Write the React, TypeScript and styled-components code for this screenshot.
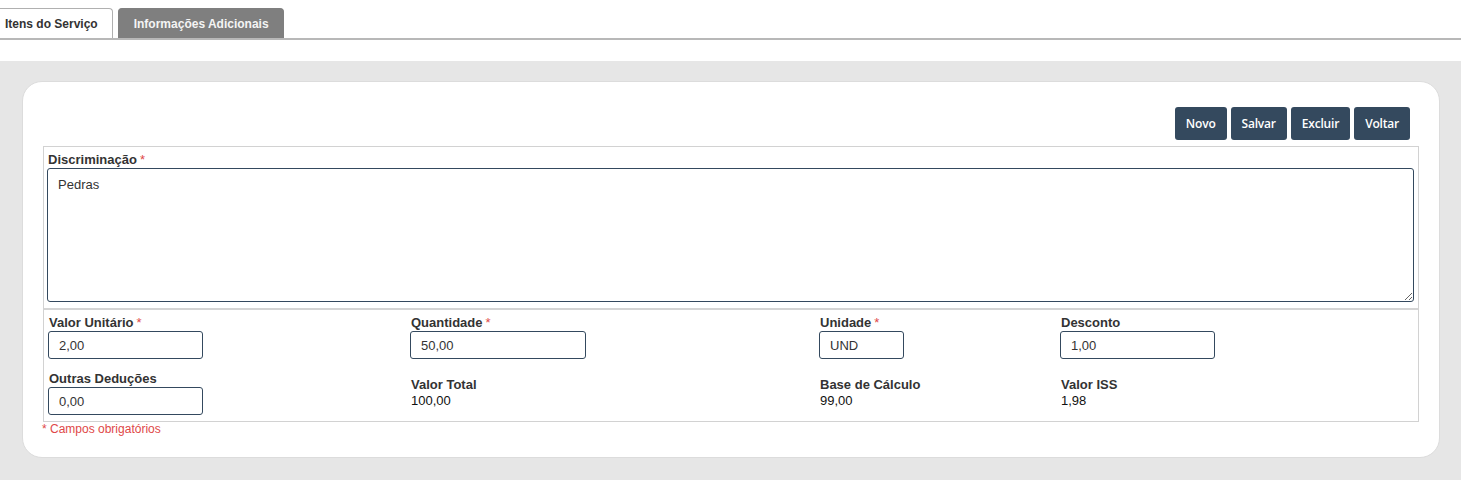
import styled, { createGlobalStyle } from "styled-components";

const GlobalStyle = createGlobalStyle`
  body {
    margin: 0;
    background: #ffffff;
    font-family: "Liberation Sans", Arial, sans-serif;
    color: #333333;
  }
`;

const Page = styled.div`
  min-height: 100vh;
  display: flex;
  flex-direction: column;
`;

const TabBar = styled.div`
  display: flex;
  align-items: flex-end;
  padding-top: 8px;
  border-bottom: 2px solid #b8b8b8;
  overflow: hidden;
`;

const Tab = styled.div<{ $active?: boolean }>`
  height: 30px;
  box-sizing: border-box;
  display: flex;
  align-items: center;
  padding: 0 14px 0 15px;
  margin-right: 5px;
  font-size: 12px;
  font-weight: bold;
  border: 1px solid ${(p) => (p.$active ? "#b0b0b0" : "#7f7f7f")};
  border-bottom: none;
  border-radius: 4px 4px 0 0;
  background: ${(p) => (p.$active ? "#ffffff" : "#7f7f7f")};
  color: ${(p) => (p.$active ? "#333333" : "#f4f4f4")};
  &:first-child {
    margin-left: -11px;
  }
`;

const Backdrop = styled.div`
  flex: 1;
  margin-top: 21px;
  background: #e6e6e6;
  padding: 20px 21px 22px 22px;
`;

const Card = styled.div`
  background: #ffffff;
  border: 1px solid #dcdcdc;
  border-radius: 20px;
  padding: 25px 20px 20px 20px;
`;

const Toolbar = styled.div`
  display: flex;
  justify-content: flex-end;
  gap: 4px;
  padding-right: 9px;
  margin-bottom: 6px;
`;

const ActionButton = styled.button`
  height: 33px;
  padding: 0 11px;
  border: none;
  border-radius: 3px;
  background: #34495e;
  color: #ffffff;
  font-family: "Open Sans", "Liberation Sans", sans-serif;
  font-weight: 600;
  font-size: 12px;
  letter-spacing: -0.2px;
  cursor: pointer;
`;

const FormBox = styled.div`
  border: 1px solid #d2d2d2;
`;

const DescSection = styled.div`
  padding: 5px 4px 6px 3px;
  border-bottom: 2px solid #d4d4d4;
`;

const Label = styled.label`
  display: block;
  font-size: 13px;
  font-weight: bold;
  line-height: 16px;
  color: #333333;
  padding-left: 1px;
`;

const Required = styled.span`
  color: #e04848;
  font-weight: normal;
  margin-left: 3px;
`;

const TextArea = styled.textarea`
  display: block;
  width: 100%;
  height: 134px;
  box-sizing: border-box;
  border: 1px solid #34495e;
  border-radius: 3px;
  padding: 8px 10px;
  font-family: "Liberation Sans", Arial, sans-serif;
  font-size: 13px;
  color: #333333;
  resize: vertical;
`;

const FieldGrid = styled.div`
  display: grid;
  grid-template-columns: 362px 409px 241px 1fr;
  row-gap: 12px;
  align-items: center;
  padding: 5px 4px 6px 4px;
`;

const Field = styled.div``;

const Input = styled.input<{ $width: number }>`
  display: block;
  width: ${(p) => p.$width}px;
  height: 28px;
  box-sizing: border-box;
  border: 1px solid #34495e;
  border-radius: 3px;
  padding: 0 10px;
  font-family: "Liberation Sans", Arial, sans-serif;
  font-size: 13px;
  color: #333333;
`;

const Value = styled.div`
  font-size: 13px;
  line-height: 16px;
  color: #111111;
  padding-left: 1px;
`;

const Note = styled.div`
  margin-left: -1px;
  font-size: 12px;
  line-height: 15px;
  color: #e04848;
`;

export default function App() {
  return (
    <Page>
      <GlobalStyle />
      <TabBar>
        <Tab $active>Itens do Serviço</Tab>
        <Tab>Informações Adicionais</Tab>
      </TabBar>
      <Backdrop>
        <Card>
          <Toolbar>
            <ActionButton>Novo</ActionButton>
            <ActionButton>Salvar</ActionButton>
            <ActionButton>Excluir</ActionButton>
            <ActionButton>Voltar</ActionButton>
          </Toolbar>
          <FormBox>
            <DescSection>
              <Label>
                Discriminação<Required>*</Required>
              </Label>
              <TextArea defaultValue="Pedras" />
            </DescSection>
            <FieldGrid>
              <Field>
                <Label>
                  Valor Unitário<Required>*</Required>
                </Label>
                <Input $width={155} defaultValue="2,00" />
              </Field>
              <Field>
                <Label>
                  Quantidade<Required>*</Required>
                </Label>
                <Input $width={176} defaultValue="50,00" />
              </Field>
              <Field>
                <Label>
                  Unidade<Required>*</Required>
                </Label>
                <Input $width={85} defaultValue="UND" />
              </Field>
              <Field>
                <Label>Desconto</Label>
                <Input $width={155} defaultValue="1,00" />
              </Field>
              <Field>
                <Label>Outras Deduções</Label>
                <Input $width={155} defaultValue="0,00" />
              </Field>
              <Field>
                <Label>Valor Total</Label>
                <Value>100,00</Value>
              </Field>
              <Field>
                <Label>Base de Cálculo</Label>
                <Value>99,00</Value>
              </Field>
              <Field>
                <Label>Valor ISS</Label>
                <Value>1,98</Value>
              </Field>
            </FieldGrid>
          </FormBox>
          <Note>* Campos obrigatórios</Note>
        </Card>
      </Backdrop>
    </Page>
  );
}
